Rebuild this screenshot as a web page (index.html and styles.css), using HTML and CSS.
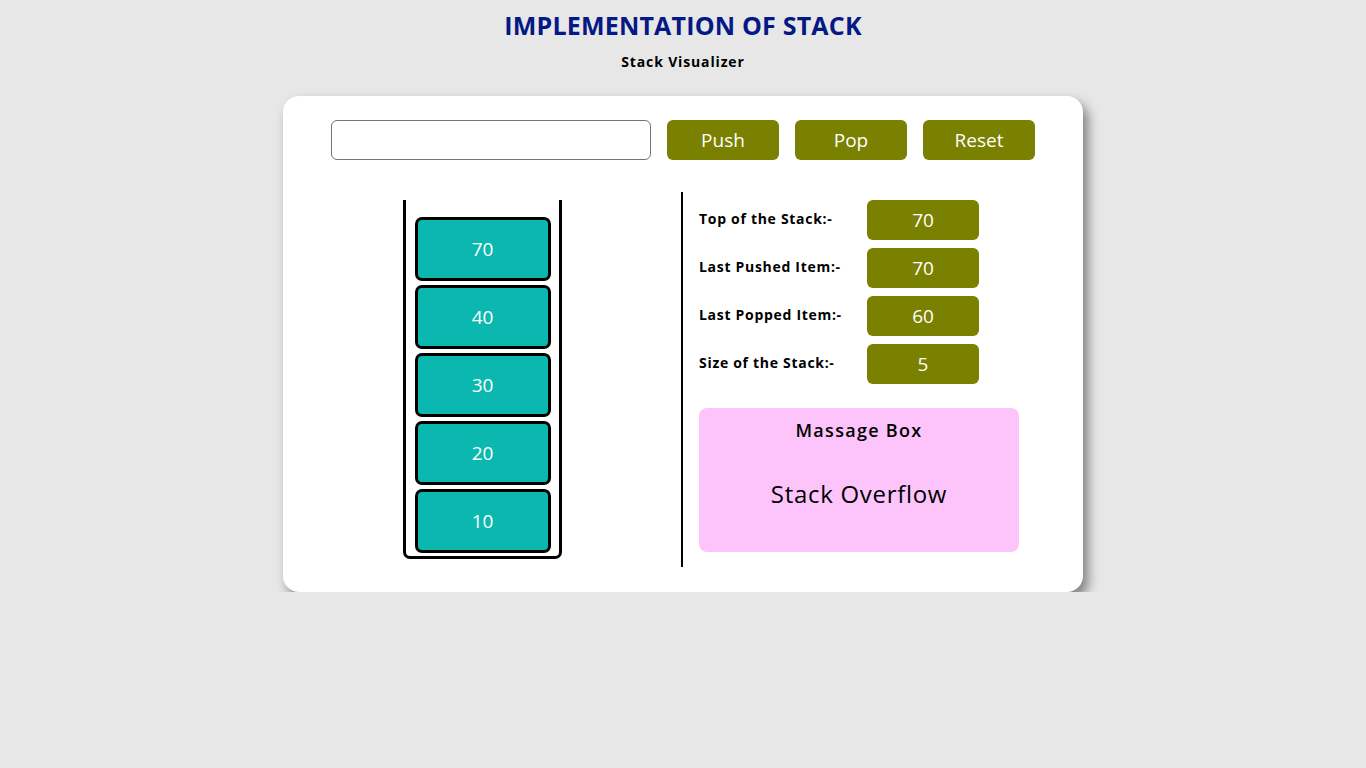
FILE: index.html
```html
<!DOCTYPE html>
<html lang="en">
<head>
<meta charset="UTF-8">
<title>Stack Visualizer</title>
<link rel="stylesheet" href="styles.css">
</head>
<body>
<header class="page-head">
  <h1 class="title">IMPLEMENTATION OF STACK</h1>
  <h2 class="subtitle">Stack Visualizer</h2>
</header>
<main class="card">
  <div class="controls">
    <input class="value-input" type="text">
    <button class="btn">Push</button>
    <button class="btn">Pop</button>
    <button class="btn">Reset</button>
  </div>
  <div class="workspace">
    <div class="stack-col">
      <div class="stack">
        <div class="item">70</div>
        <div class="item">40</div>
        <div class="item">30</div>
        <div class="item">20</div>
        <div class="item">10</div>
      </div>
    </div>
    <div class="divider"></div>
    <div class="info-col">
      <div class="info-row"><span class="label">Top of the Stack:-</span><span class="value">70</span></div>
      <div class="info-row"><span class="label">Last Pushed Item:-</span><span class="value">70</span></div>
      <div class="info-row"><span class="label">Last Popped Item:-</span><span class="value">60</span></div>
      <div class="info-row"><span class="label">Size of the Stack:-</span><span class="value">5</span></div>
      <div class="message-box">
        <div class="message-title">Massage Box</div>
        <div class="message-text">Stack Overflow</div>
      </div>
    </div>
  </div>
</main>
</body>
</html>
```
FILE: styles.css
```css
* { box-sizing: border-box; }
body {
  margin: 0;
  background: #e7e7e7;
  font-family: "Open Sans", "Liberation Sans", sans-serif;
  color: #000;
}
.page-head {
  text-align: center;
  padding-top: 7px;
  height: 96px;
}
.title {
  margin: 0;
  font-size: 25px;
  line-height: 36px;
  font-weight: 700;
  letter-spacing: 0.2px;
  color: #041886;
}
.subtitle {
  margin: 10px 0 0;
  font-size: 14px;
  line-height: 18px;
  font-weight: 700;
  letter-spacing: 0.85px;
}
.card {
  width: 800px;
  margin: 0 auto;
  background: #fff;
  border-radius: 16px;
  padding: 24px 48px 25px;
  box-shadow: 5px 7px 12px rgba(0, 0, 0, 0.45);
}
.controls {
  display: flex;
  gap: 16px;
  height: 40px;
}
.value-input {
  width: 320px;
  height: 40px;
  border: 1px solid #767676;
  border-radius: 6px;
  margin: 0;
  font: inherit;
}
.btn {
  width: 112px;
  height: 40px;
  border: none;
  border-radius: 6px;
  background: #7a8000;
  color: #fff;
  font-family: inherit;
  font-size: 19px;
  padding: 0;
}
.workspace {
  display: flex;
  margin-top: 32px;
  height: 375px;
}
.stack-col {
  width: 350px;
  padding: 8px 0 0 72px;
}
.stack {
  width: 159px;
  height: 359px;
  border: 3px solid #000;
  border-top: none;
  border-radius: 0 0 7px 7px;
  display: flex;
  flex-direction: column;
  justify-content: flex-end;
  align-items: center;
  gap: 4px;
  padding-bottom: 3px;
}
.item {
  width: 136px;
  height: 64px;
  border: 3px solid #000;
  border-radius: 7px;
  background: #0bb8b0;
  color: #fff;
  font-size: 19px;
  display: flex;
  align-items: center;
  justify-content: center;
}
.divider {
  width: 2px;
  background: #000;
}
.info-col {
  padding: 8px 0 0 16px;
  display: flex;
  flex-direction: column;
  gap: 8px;
}
.info-row {
  display: flex;
  align-items: center;
  height: 40px;
}
.label {
  width: 168px;
  font-size: 14px;
  font-weight: 700;
  letter-spacing: 0.7px;
  padding-bottom: 3px;
}
.value {
  width: 112px;
  height: 40px;
  border-radius: 6px;
  background: #7a8000;
  color: #fff;
  font-size: 19px;
  display: flex;
  align-items: center;
  justify-content: center;
}
.message-box {
  margin-top: 16px;
  width: 320px;
  height: 144px;
  border-radius: 8px;
  background: #fdc4fc;
  text-align: center;
  padding-top: 10px;
}
.message-title {
  font-size: 18px;
  font-weight: 600;
  line-height: 24px;
  letter-spacing: 1.3px;
}
.message-text {
  margin-top: 37px;
  font-size: 24px;
  line-height: 30px;
  letter-spacing: 0.7px;
}
```
